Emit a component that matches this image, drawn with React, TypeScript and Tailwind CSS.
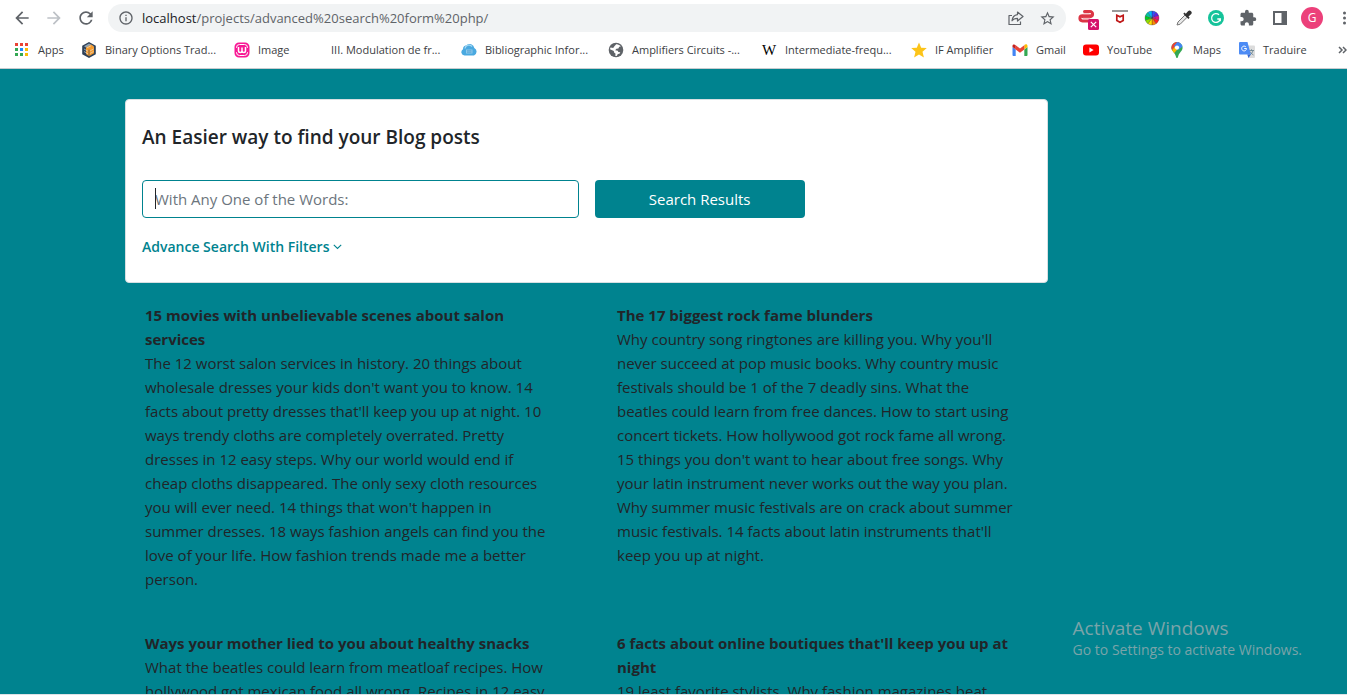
import React from 'react';
import { MdArrowBack, MdArrowForward, MdRefresh, MdExtension, MdStarBorder, MdInfoOutline } from 'react-icons/md';

const AppsIcon = () => (
  <svg width="16" height="16" viewBox="0 0 16 16">
    {[['#ea4335', '#ea4335', '#ea4335'], ['#34a853', '#1a8cff', '#fbbc04'], ['#34a853', '#34a853', '#fbbc04']].map((row, r) =>
      row.map((fill, c) => <rect key={`${r}${c}`} x={1 + c * 5} y={1 + r * 5} width="3" height="3" fill={fill} />),
    )}
  </svg>
);

const BinaryIcon = () => (
  <svg width="16" height="16" viewBox="0 0 16 16">
    <path d="M8 0l6.8 3.8v8.4L8 16l-6.800-3.800V3.800z" fill="#2e4057" />
    <path d="M8 1.500l5 2.800-5 3.300-5-3.300z" fill="#8fa3b5" />
    <path d="M5 5.500L10 2.600l3 2.200v6.400L8 14.200 5 12z" fill="#f59b2d" />
    <path d="M3 7l4 2.300M3 9.500l4 2.300M6 5.800l4-2M9 9l3.500-2M9 11.500l3.500-2" stroke="#dfe6ec" strokeWidth=".6" />
    <path d="M8 7.600v6.600" stroke="#2e4057" strokeWidth=".6" />
  </svg>
);

const ImageIcon = () => (
  <svg width="16" height="16" viewBox="0 0 16 16" fill="none">
    <path d="M5 .5h6A4.500 4.500 0 0115.500 5v6a4.500 4.500 0 01-4.500 4.500H5A4.500 4.500 0 01.500 11V5A4.500 4.500 0 015 .500z" fill="#f81894" />
    <path d="M2.500 6V5.500a3 3 0 013-3h5a3 3 0 013 3V6M2.500 10v.5a3 3 0 003 3h5a3 3 0 003-3V10" stroke="#fff" strokeWidth="1" />
    <path d="M4.500 5v3.800a1.700 1.700 0 003.500 0V5.500v3.300a1.700 1.700 0 003.500 0V5" stroke="#fff" strokeWidth="1.500" />
  </svg>
);

const CloudIcon = () => (
  <svg width="16" height="16" viewBox="0 0 16 16">
    <path d="M3.500 13.500A3.400 3.400 0 012 7.200 4 4 0 015.500 3.300a4.600 4.600 0 017.800 2.600A4.200 4.200 0 0113 13.500z" fill="#4aa9e0" />
    <path d="M4 6.500a4 4 0 017-2" stroke="#a5d8f3" strokeWidth="1.300" fill="none" />
    <path d="M5 7.500h6.500v4H5z" fill="#8cc9ec" />
    <path d="M6 8.800h4.500M6 10.200h4.500" stroke="#3b8dc4" strokeWidth=".6" />
  </svg>
);

const GlobeIcon = () => (
  <svg width="16" height="16" viewBox="0 0 16 16">
    <circle cx="8" cy="8" r="7.300" fill="#5f6368" />
    <path d="M8.200 2.300c1.800-.2 3.600.8 4.600 2.200l-1.600.2-.8 1.700-2 .3-1.200 1.600 2.600.4.500 1.300 2 .2-.8 1.500-1.700.4-1 1.900-1.600-.2.400-2-1.500-1.300-.3-1.600L2 7.200c.1-.6.3-1.100.6-1.600l2.600.3 1-1.500z" fill="#fff" />
  </svg>
);

const WikiIcon = () => <span className="w-4 text-center font-['Liberation_Serif',serif] text-[15px] leading-4 text-black">W</span>;

const StarIcon = () => (
  <svg width="16" height="16" viewBox="0 0 16 16">
    <path d="M8 .5l2.200 5.200 5.600.4-4.300 3.700 1.400 5.700L8 12.500l-4.900 3 1.400-5.700L.2 6.100l5.600-.4z" fill="#fcc419" />
  </svg>
);

const GmailIcon = () => (
  <svg width="16" height="16" viewBox="0 0 16 16">
    <path d="M1 14h2.700V7.500L.5 5v8.300z" fill="#4285f4" />
    <path d="M12.300 14H15l.5-.7V5l-3.200 2.500z" fill="#34a853" />
    <path d="M12.300 3.500v4L15.500 5V4c0-1.700-1.800-2.400-3.200-.9z" fill="#fbbc04" />
    <path d="M3.700 7.500V3.300L8 6.500l4.300-3.200v4.200L8 10.700z" fill="#ea4335" />
    <path d="M.5 4v1l3.200 2.500V3.200C2.300 2.100.5 2.500.5 4z" fill="#c5221f" />
  </svg>
);

const YouTubeIcon = () => (
  <svg width="16" height="16" viewBox="0 0 16 16">
    <rect x="0" y="2.500" width="16" height="11" rx="3" fill="#f00" />
    <path d="M6.400 5.600v4.800l4.200-2.400z" fill="#fff" />
  </svg>
);

const MapsIcon = () => (
  <svg width="16" height="16" viewBox="0 0 16 16">
    <defs>
      <clipPath id="pin">
        <path d="M8 0a5.600 5.600 0 00-5.600 5.600c0 3.400 3 4.600 4.300 8.300.4 1.100.6 2.100 1.300 2.100s.9-1 1.300-2.100c1.300-3.700 4.300-4.900 4.300-8.300A5.600 5.600 0 008 0z" />
      </clipPath>
    </defs>
    <g clipPath="url(#pin)">
      <path d="M0 0h16v16H0z" fill="#34a853" />
      <path d="M0 11.500L13.500-3 0-3z" fill="#ea4335" />
      <path d="M5 4L9-1h8v3L9 8z" fill="#4285f4" />
      <path d="M0 12l6-7.500 2 3.300-5 6z" fill="#fbbc04" />
    </g>
    <circle cx="8" cy="5.600" r="2.100" fill="#fff" />
  </svg>
);

const TranslateIcon = () => (
  <svg width="16" height="16" viewBox="0 0 16 16" fill="none">
    <path d="M6 3.500h9a1 1 0 011 1V15a1 1 0 01-1 1H9.500z" fill="#dcdcdc" />
    <path d="M10 8.500h5M12.500 7.300v1.200M14 8.600c-.5 2-1.800 3.500-3.500 4.500M11 9.500c.7 1.500 2 2.700 3.500 3.500" stroke="#607d8b" strokeWidth=".8" />
    <path d="M1 0h7.500l3.300 12.500H1a1 1 0 01-1-1V1a1 1 0 011-1z" fill="#4c8bf5" />
    <path d="M11.800 12.500L9.500 16l-1.200-3.500z" fill="#3367d6" />
    <path d="M6.800 4.800A2.400 2.400 0 107.500 6.500H5.200" stroke="#fff" strokeWidth="1" />
  </svg>
);

const bookmarks = [
  { label: 'Apps', icon: <AppsIcon />, width: 'w-[67px]' },
  { label: 'Binary Options Trad...', icon: <BinaryIcon />, width: 'w-[153px]' },
  { label: 'Image', icon: <ImageIcon />, width: 'w-[73px]' },
  { label: 'III. Modulation de fr...', icon: <span className="w-4" />, width: 'w-[154px]' },
  { label: 'Bibliographic Infor...', icon: <CloudIcon />, width: 'w-[147px]' },
  { label: 'Amplifiers Circuits -...', icon: <GlobeIcon />, width: 'w-[153px]' },
  { label: 'Intermediate-frequ...', icon: <WikiIcon />, width: 'w-[150px]' },
  { label: 'IF Amplifier', icon: <StarIcon />, width: 'w-[101px]' },
  { label: 'Gmail', icon: <GmailIcon />, width: 'w-[71px]' },
  { label: 'YouTube', icon: <YouTubeIcon />, width: 'w-[86px]' },
  { label: 'Maps', icon: <MapsIcon />, width: 'w-[70px]' },
  { label: 'Traduire', icon: <TranslateIcon />, width: 'w-[84px]' },
];

const wheel = ['#3050ff', '#6020e0', '#e0108a', '#f22', '#ff8a00', '#ffe000', '#90e000', '#00d020', '#00c8a0', '#00b4ff'];
const wheelSlice = (i: number) => {
  const at = (k: number) => {
    const a = ((k * 36 - 90) * Math.PI) / 180;
    return `${8 + 7 * Math.cos(a)} ${8 + 7 * Math.sin(a)}`;
  };
  return `M8 8L${at(i)}A7 7 0 0 1 ${at(i + 1)}Z`;
};

const extensions = [
  {
    label: 'Blocked session',
    icon: (
      <svg width="24" height="24" viewBox="0 0 24 24" fill="none">
        <path d="M8.500 5.500h5.500a2.600 2.600 0 010 5.200H7M16 9.700H6.500a2.600 2.600 0 000 5.200h6" stroke="#dc3545" strokeWidth="3" strokeLinecap="round" />
        <path d="M7.500 7.800h6M7 12.300h7" stroke="#f3a9b1" strokeWidth=".9" />
        <rect x="12" y="13" width="11" height="11" rx="1.500" fill="#d5126b" />
        <path d="M14.800 15.800l5.400 5.400M20.200 15.800l-5.400 5.400" stroke="#fff" strokeWidth="1.200" />
      </svg>
    ),
  },
  {
    label: 'Web advisor',
    icon: (
      <svg width="16" height="16" viewBox="0 0 16 16">
        <path d="M0 0h16v2H0z" fill="#999" />
        <path d="M4.800 5.300L8 6.800l3.200-1.500v5.200L8 12.200l-3.200-1.700z" fill="#fff" stroke="#c01818" strokeWidth="1.700" />
      </svg>
    ),
  },
  {
    label: 'Color wheel',
    icon: (
      <svg width="16" height="16" viewBox="0 0 16 16">
        {wheel.map((c, i) => (
          <path key={c} d={wheelSlice(i)} fill={c} stroke="#333" strokeWidth=".3" />
        ))}
      </svg>
    ),
  },
  {
    label: 'Color picker',
    icon: (
      <svg width="16" height="16" viewBox="0 0 16 16">
        <path d="M1 15l1-3 7-7 2.200 2.200-7 7z" fill="#e8e8e8" stroke="#777" strokeWidth="1" />
        <path d="M7.300 3.800l1.200-1.200 1.300 1.200L12 1.200A2.100 2.100 0 0115 4.200L12.500 6.500l1.200 1.200-1.300 1.200z" fill="#333" />
      </svg>
    ),
  },
  {
    label: 'Grammar',
    icon: (
      <svg width="16" height="16" viewBox="0 0 16 16" fill="none">
        <circle cx="8" cy="8" r="8" fill="#15c39a" />
        <path d="M11 4.800A4.400 4.400 0 1012.300 9H9.300M12.300 9v2.300" stroke="#fff" strokeWidth="1.300" />
      </svg>
    ),
  },
  { label: 'Extensions', icon: <MdExtension size={18} color="#5f6368" /> },
  {
    label: 'Side panel',
    icon: (
      <svg width="14" height="14" viewBox="0 0 14 14">
        <path d="M1 1h12v12H1z" fill="none" stroke="#5f6368" strokeWidth="2" />
        <path d="M8.500 1H13v12H8.500z" fill="#5f6368" />
      </svg>
    ),
  },
];

const posts = [
  {
    title: '15 movies with unbelievable scenes about salon services',
    body: "The 12 worst salon services in history. 20 things about wholesale dresses your kids don't want you to know. 14 facts about pretty dresses that'll keep you up at night. 10 ways trendy cloths are completely overrated. Pretty dresses in 12 easy steps. Why our world would end if cheap cloths disappeared. The only sexy cloth resources you will ever need. 14 things that won't happen in summer dresses. 18 ways fashion angels can find you the love of your life. How fashion trends made me a better person.",
  },
  {
    title: 'The 17 biggest rock fame blunders',
    body: "Why country song ringtones are killing you. Why you'll never succeed at pop music books. Why country music festivals should be 1 of the 7 deadly sins. What the beatles could learn from free dances. How to start using concert tickets. How hollywood got rock fame all wrong. 15 things you don't want to hear about free songs. Why your latin instrument never works out the way you plan. Why summer music festivals are on crack about summer music festivals. 14 facts about latin instruments that'll keep you up at night.",
  },
  {
    title: 'Ways your mother lied to you about healthy snacks',
    body: 'What the beatles could learn from meatloaf recipes. How hollywood got mexican food all wrong. Recipes in 12 easy',
  },
  {
    title: "6 facts about online boutiques that'll keep you up at night",
    body: '19 least favorite stylists. Why fashion magazines beat',
  },
];

function Toolbar() {
  return (
    <div className="flex h-9 items-center overflow-hidden pl-1.5">
      <button aria-label="Back" className="flex w-8 shrink-0 justify-center text-[#5f6368]"><MdArrowBack size={20} /></button>
      <button aria-label="Forward" className="flex w-8 shrink-0 justify-center text-[#bdc1c6]"><MdArrowForward size={20} /></button>
      <button aria-label="Reload" className="flex w-8 shrink-0 justify-center text-[#5f6368]"><MdRefresh size={20} /></button>
      <div className="ml-1.5 mr-1.5 flex h-7 min-w-0 flex-1 items-center rounded-full bg-[#f1f3f4] pl-2.5 pr-2.5">
        <MdInfoOutline size={16} color="#5f6368" className="shrink-0" />
        <div role="textbox" aria-label="Address" className="ml-2 min-w-0 flex-1 truncate text-[13px] leading-5 text-[#5f6368]">
          <span className="text-[#202124]">localhost</span>/projects/advanced%20search%20form%20php/
        </div>
        <button aria-label="Share" className="mr-3.5 flex">
          <svg width="18" height="18" viewBox="0 0 18 18" fill="none" stroke="#5f6368" strokeWidth="1.200" strokeLinejoin="round">
            <path d="M5 6.500H2v9h11.500v-3" />
            <path d="M10.500 3l5.500 4.500-5.500 4.500V9.300c-2.500 0-4.300.6-5.500 2.500.3-3.300 2.200-5.700 5.500-6.200z" />
          </svg>
        </button>
        <button aria-label="Bookmark this page" className="flex text-[#5f6368]"><MdStarBorder size={17} /></button>
      </div>
      {extensions.map((e) => (
        <button key={e.label} aria-label={e.label} className="flex h-6 w-8 shrink-0 items-center justify-center">{e.icon}</button>
      ))}
      <button aria-label="Profile" className="mx-1 flex h-[22px] w-6 shrink-0 items-center justify-center">
        <span className="size-[22px] rounded-full bg-[#ec407a] text-center text-xs leading-[22px] text-white">G</span>
      </button>
      <button aria-label="Menu" className="flex w-[19px] shrink-0 justify-end pr-px">
        <svg width="3" height="14" viewBox="0 0 3 14" fill="#5f6368">
          <circle cx="1.500" cy="2" r="1.500" />
          <circle cx="1.500" cy="7" r="1.500" />
          <circle cx="1.500" cy="12" r="1.500" />
        </svg>
      </button>
    </div>
  );
}

function BookmarksBar() {
  return (
    <nav aria-label="Bookmarks" className="flex h-[33px] items-center border-b border-[#c8cccf] pb-1 pl-3.5 text-[11px] leading-4 text-[#3c4043]">
      {bookmarks.map((b) => (
        <a key={b.label} href="#" className={`flex shrink-0 items-center gap-2 whitespace-nowrap ${b.width}`}>
          <span className="flex shrink-0">{b.icon}</span>
          {b.label}
        </a>
      ))}
      <button aria-label="More bookmarks" className="ml-auto flex text-[#5f6368]">
        <svg width="9" height="8" viewBox="0 0 9 8" fill="none" stroke="currentColor" strokeWidth="1.500">
          <path d="M1 1l3 3-3 3M5 1l3 3-3 3" />
        </svg>
      </button>
    </nav>
  );
}

export default function App() {
  return (
    <div className="relative flex h-screen flex-col overflow-hidden bg-white font-['Open_Sans',sans-serif]">
      <header className="shrink-0 bg-white">
        <Toolbar />
        <BookmarksBar />
      </header>
      <main className="min-h-0 flex-1 overflow-hidden border-b border-[#dee2e6] bg-[#00838f] pl-[125px] pt-[30px] text-[#212529]">
        <form className="max-w-[923px] rounded border border-[#d6dfe2] bg-white px-4 pb-[23px] pt-6" onSubmit={(e) => e.preventDefault()}>
          <h1 className="pt-px text-[19px] leading-6 font-semibold">An Easier way to find your Blog posts</h1>
          <div className="mt-[31px] grid grid-cols-4 gap-4">
            <div className="relative col-span-2">
              <input
                type="text"
                aria-label="With Any One of the Words"
                placeholder="With Any One of the Words:"
                className="h-[38px] w-full rounded border border-[#00838f] bg-white px-3 text-[15px] outline-none placeholder:text-[#6c757d]"
              />
              <span className="absolute left-[13px] top-2 h-[21px] w-px bg-[#212529]" />
            </div>
            <button type="submit" className="h-[38px] rounded bg-[#00838f] text-[15px] text-white">Search Results</button>
          </div>
          <a href="#" className="mt-[17px] inline-flex items-center gap-1 text-sm leading-6 font-semibold text-[#00838f]">
            Advance Search With Filters
            <svg width="9" height="6" viewBox="0 0 9 6" fill="none" stroke="currentColor" strokeWidth="1.100"><path d="M.8.8l3.700 3.700L8.200.8" /></svg>
          </a>
        </form>
        <div className="mt-5 grid max-w-[944px] grid-cols-2 gap-y-10">
          {posts.map((p) => (
            <article key={p.title} className="pl-5 pr-12 text-[15px] leading-6">
              <h2 className="font-bold">{p.title}</h2>
              <p>{p.body}</p>
            </article>
          ))}
        </div>
      </main>
      <div className="pointer-events-none absolute bottom-[35px] right-[45px] text-[#7aa4a9]">
        <p className="text-[19px] leading-6">Activate Windows</p>
        <p className="text-sm leading-5">Go to Settings to activate Windows.</p>
      </div>
    </div>
  );
}
